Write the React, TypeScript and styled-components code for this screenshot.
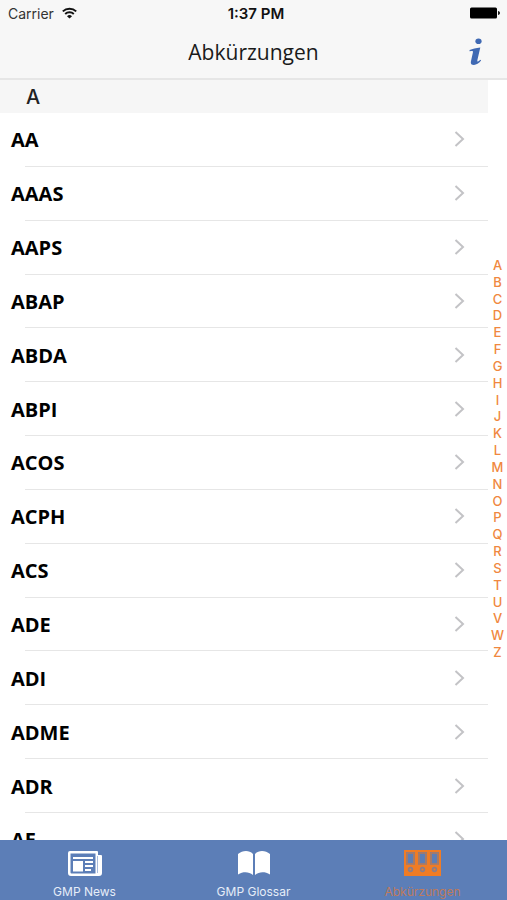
import React, { useState } from "react";
import styled, { createGlobalStyle } from "styled-components";

const GlobalStyle = createGlobalStyle`
  * { box-sizing: border-box; }
  body { margin: 0; background: #fff; }
  button { border: 0; padding: 0; background: none; font: inherit; color: inherit; cursor: pointer; }
`;

const ui = `"Inter", "Liberation Sans", sans-serif`;
const text = `"Open Sans", "Noto Sans", sans-serif`;

const Screen = styled.div`
  display: flex;
  flex-direction: column;
  height: 100vh;
  font-family: ${ui};
  color: #000;
`;

const Header = styled.header`
  flex: none;
  background: #f7f7f7;
  border-bottom: 2px solid #e6e6e6;
`;

const StatusBar = styled.div`
  display: grid;
  grid-template-columns: 1fr auto 1fr;
  align-items: center;
  height: 26px;
  padding: 0 7px 0 8px;
  font-size: 14px;
  color: #333;
`;

const Carrier = styled.span`
  display: flex;
  align-items: center;
  gap: 8px;
`;

const Clock = styled.time`
  padding-top: 1px;
  padding-left: 4px;
  font-size: 15px;
  font-weight: 600;
  color: #111;
`;

const Battery = styled.svg`
  justify-self: end;
`;

const NavBar = styled.div`
  display: grid;
  grid-template-columns: 1fr auto 1fr;
  align-items: center;
  height: 52px;
  padding-right: 24px;
  padding-left: 24px;
`;

const Title = styled.h1`
  grid-column: 2;
  margin: 0;
  font: 400 21px/28px ${text};
  color: #1a1a1a;
`;

const InfoButton = styled.button`
  display: flex;
  justify-self: end;
`;

const Content = styled.main`
  flex: 1;
  min-height: 0;
  display: flex;
`;

const Section = styled.section`
  flex: 1;
  min-width: 0;
  display: flex;
  flex-direction: column;
`;

const SectionTitle = styled.h2`
  flex: none;
  margin: 0;
  padding-top: 2px;
  padding-left: 26px;
  background: #f6f6f6;
  font: 500 20px/31px ${ui};
  color: #222;
`;

/* Shows thirteen and a half rows, so the cut row hints at more below. */
const List = styled.ul`
  flex: 1;
  min-height: 0;
  margin: 0;
  padding: 0;
  list-style: none;
  display: grid;
  grid-auto-rows: calc(100% / 13.5);
  overflow-y: auto;
  scrollbar-width: none;
`;

const Item = styled.li`
  display: flex;
  flex-direction: column;

  &::after {
    content: "";
    height: 1px;
    margin-left: 25px;
    background: #e6e6e6;
  }
`;

const RowButton = styled.button`
  flex: 1;
  display: flex;
  align-items: center;
  justify-content: space-between;
  padding: 0 23px 0 11px;
`;

const RowLabel = styled.span`
  padding-top: 2px;
  font: 700 20px/28px ${text};
`;

const IndexBar = styled.nav`
  flex: none;
  align-self: center;
  width: 19px;
  height: 404px;
  margin-bottom: 3px;
  display: grid;
  grid-auto-rows: 1fr;
`;

const Letter = styled.a`
  display: flex;
  align-items: center;
  justify-content: center;
  font-size: 13px;
  font-weight: 500;
  line-height: 16px;
  color: #f0883f;
  text-decoration: none;
`;

const TabBar = styled.nav`
  flex: none;
  display: grid;
  grid-template-columns: repeat(3, 1fr);
  height: 60px;
  background: #5c7eb7;
`;

const Tab = styled.button<{ $active: boolean }>`
  display: flex;
  flex-direction: column;
  align-items: center;
  gap: 8px;
  padding-top: 9px;
  font-size: 12px;
  line-height: 16px;
  color: ${(p) => (p.$active ? "#f07c25" : "#fff")};
`;

const TabLabel = styled.span<{ $active: boolean }>`
  color: ${(p) => (p.$active ? "#bd7a5c" : "#e6edf8")};
`;

const WifiIcon = () => (
  <svg width="15" height="12" viewBox="0 0 15 12" aria-hidden="true">
    <g fill="none" stroke="#111" strokeWidth="1.9">
      <path d="M0.8 4.4a9.6 9.6 0 0 1 13.4 0" />
      <path d="M3.2 7a6.1 6.1 0 0 1 8.6 0" />
    </g>
    <path d="M7.5 11.6 5 9.2a3.6 3.6 0 0 1 5 0z" fill="#111" />
  </svg>
);

const BatteryIcon = () => (
  <Battery width="30" height="12" viewBox="0 0 30 12" aria-hidden="true">
    <rect x="0" y="0.5" width="27" height="11" rx="1.5" fill="#000" />
    <path d="M28 4c1.4.3 2 1 2 2s-.6 1.700-2 2z" fill="#222" />
  </Battery>
);

const InfoIcon = () => (
  <svg width="14" height="28" viewBox="0 0 14 28" aria-hidden="true">
    <g fill="#3f69b3">
      <ellipse cx="9.500" cy="3.300" rx="3.100" ry="2.800" />
      <path d="M.6 12C3.700 10.900 6.700 9.700 11.300 9.400L8.400 22c-.3 1.500.2 1.900 1 1.300l2.100-1.600.6.900C9.800 25.500 7.300 27 5 27c-2.500 0-3.600-1.400-3.100-3.600l2-8.900c.2-1.100-.2-1.500-1.300-1.400L.500 13.300z" />
    </g>
  </svg>
);

const Chevron = () => (
  <svg width="11" height="16" viewBox="0 0 11 16" aria-hidden="true">
    <path d="M1.500 1l7.500 7-7.500 7" fill="none" stroke="#c3c3c6" strokeWidth="2" />
  </svg>
);

const NewsIcon = () => (
  <svg width="36" height="27" viewBox="0 0 36 27" aria-hidden="true">
    <path
      fill="#fff"
      fillRule="evenodd"
      d="M3 2h27a1 1 0 0 1 1 1v3h3a1 1 0 0 1 1 1v17a3 3 0 0 1-3 3H4a3 3 0 0 1-3-3V4a2 2 0 0 1 2-2zM3.500 4.500V23.500a1 1 0 0 0 1 1h24V4.500z"
    />
    <g fill="#fff">
      <path d="M6 8h20v2H6zM6 12h10v10.500H6zM18 12h8v2h-8zM18 16h8v2h-8zM18 20h6v2h-6z" />
    </g>
    <path d="M30.500 7v17" stroke="#a9bcdd" strokeWidth="1" />
  </svg>
);

const BookIcon = () => (
  <svg width="34" height="27" viewBox="0 0 34 27" aria-hidden="true">
    <path
      fill="#fff"
      d="M16 5C14 2.800 11.500 2 9 2 6 2 3.500 3 1 5v20.500c2.500-1.600 5-2.200 7.500-2.200 2.700 0 5.200.8 7.500 2.700zM18 5c2-2.200 4.500-3 7-3 3 0 5.500 1 8 3v20.500c-2.500-1.600-5-2.200-7.500-2.200-2.700 0-5.200.8-7.500 2.700z"
    />
  </svg>
);

const BindersIcon = () => (
  <svg width="37" height="27" viewBox="0 0 37 27" aria-hidden="true">
    {[0, 12, 24].map((x) => (
      <g key={x} transform={`translate(${x} 0)`}>
        <path
          fill="#f07c25"
          fillRule="evenodd"
          d="M0 1h13v26H0zM2 3v12.500h9V3z"
        />
        <path
          d="M3 4h7v11H3z"
          fill="none"
          stroke="#b57a59"
          strokeWidth="1.600"
        />
        <circle cx="6.500" cy="20.500" r="2.700" fill="#8b7d89" />
        <circle cx="6.500" cy="20.500" r="1" fill="#f07c25" />
      </g>
    ))}
  </svg>
);

const entries = [
  "AA", "AAAS", "AAPS", "ABAP", "ABDA", "ABPI", "ACOS",
  "ACPH", "ACS", "ADE", "ADI", "ADME", "ADR", "AE",
];

const letters = "ABCDEFGHIJKLMNOPQRSTUVWZ".split("");

const tabs = [
  { label: "GMP News", Icon: NewsIcon },
  { label: "GMP Glossar", Icon: BookIcon },
  { label: "Abkürzungen", Icon: BindersIcon },
];

export default function App() {
  const [active, setActive] = useState("Abkürzungen");

  return (
    <Screen>
      <GlobalStyle />
      <Header>
        <StatusBar>
          <Carrier>
            Carrier
            <WifiIcon />
          </Carrier>
          <Clock>1:37 PM</Clock>
          <BatteryIcon />
        </StatusBar>
        <NavBar>
          <Title>Abkürzungen</Title>
          <InfoButton type="button" aria-label="Info">
            <InfoIcon />
          </InfoButton>
        </NavBar>
      </Header>
      <Content>
        <Section>
          <SectionTitle id="A">A</SectionTitle>
          <List>
            {entries.map((entry) => (
              <Item key={entry}>
                <RowButton type="button">
                  <RowLabel>{entry}</RowLabel>
                  <Chevron />
                </RowButton>
              </Item>
            ))}
          </List>
        </Section>
        <IndexBar aria-label="Index">
          {letters.map((letter) => (
            <Letter key={letter} href={`#${letter}`}>
              {letter}
            </Letter>
          ))}
        </IndexBar>
      </Content>
      <TabBar>
        {tabs.map(({ label, Icon }) => (
          <Tab
            key={label}
            type="button"
            $active={label === active}
            aria-current={label === active ? "page" : undefined}
            onClick={() => setActive(label)}
          >
            <Icon />
            <TabLabel $active={label === active}>{label}</TabLabel>
          </Tab>
        ))}
      </TabBar>
    </Screen>
  );
}
